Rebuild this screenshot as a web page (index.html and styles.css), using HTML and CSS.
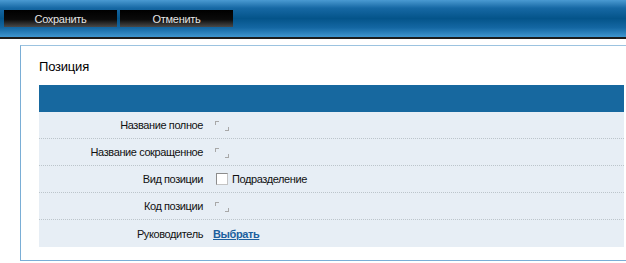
FILE: index.html
```html
<!DOCTYPE html>
<html lang="ru">
<head>
    <meta charset="UTF-8">
    <title>Позиция</title>
    <link rel="stylesheet" href="styles.css">
</head>
<body>
    <div class="toolbar">
        <button class="tool-btn">Сохранить</button>
        <button class="tool-btn">Отменить</button>
    </div>

    <div class="panel">
        <h1 class="panel-title">Позиция</h1>
        <div class="form">
            <div class="form-head"></div>
            <div class="row">
                <div class="label">Название полное</div>
                <div class="value"><span class="field-mark"></span></div>
            </div>
            <div class="row">
                <div class="label">Название сокращенное</div>
                <div class="value"><span class="field-mark"></span></div>
            </div>
            <div class="row">
                <div class="label">Вид позиции</div>
                <div class="value"><span class="check"></span>Подразделение</div>
            </div>
            <div class="row">
                <div class="label">Код позиции</div>
                <div class="value"><span class="field-mark"></span></div>
            </div>
            <div class="row">
                <div class="label">Руководитель</div>
                <div class="value"><a href="#" class="pick">Выбрать</a></div>
            </div>
        </div>
    </div>
</body>
</html>
```

FILE: styles.css
```css
body {
    margin: 0;
    padding: 0;
    font-family: "Liberation Sans", Arial, sans-serif;
    font-size: 11px;
    color: #111;
    background-color: #fff;
    overflow: hidden;
}

.toolbar {
    height: 27px;
    padding: 10px 0 0 4px;
    display: flex;
    gap: 3px;
    align-items: flex-start;
    background: linear-gradient(to bottom, #4a9ad2 0%, #1668a4 22%, #04548a 50%, #1467a3 75%, #3f96d0 100%);
    border-bottom: 2px solid #1d1d1d;
}

.tool-btn {
    width: 113px;
    height: 17px;
    padding: 0;
    border: none;
    background: linear-gradient(to bottom, #000 0%, #0a0a0a 55%, #4a4a4a 100%);
    color: #e4e4e4;
    font-family: "Liberation Sans", Arial, sans-serif;
    font-size: 11px;
    letter-spacing: -0.3px;
    cursor: pointer;
}

.panel {
    margin: 6px 0 0 20px;
    padding: 0 2px 13px 18px;
    border: 1px solid #7aaed6;
    border-right: none;
    border-top-color: #9cc3e0;
}

.panel-title {
    margin: 0;
    height: 39px;
    line-height: 42px;
    font-size: 13px;
    font-weight: normal;
    color: #000;
    letter-spacing: -0.2px;
}

.form {
    background-color: #e7eef5;
    letter-spacing: -0.4px;
}

.form-head {
    height: 27px;
    background-color: #17689f;
}

.row {
    display: flex;
    align-items: center;
    height: 27px;
    border-bottom: 1px dotted #bcc5cb;
    box-sizing: border-box;
}

.row:last-child {
    border-bottom: none;
}

.label {
    width: 164px;
    text-align: right;
    padding-right: 10px;
}

.value {
    display: flex;
    align-items: center;
}

.field-mark {
    position: relative;
    display: inline-block;
    width: 14px;
    height: 10px;
    margin-left: 2px;
    margin-top: 1px;
}

.field-mark::before,
.field-mark::after {
    content: "";
    position: absolute;
    width: 3px;
    height: 3px;
    border: 1px solid #a8a8a8;
}

.field-mark::before {
    top: 0;
    left: 0;
    border-right: none;
    border-bottom: none;
}

.field-mark::after {
    right: 0;
    bottom: 0;
    border-left: none;
    border-top: none;
}

.check {
    display: inline-block;
    width: 10px;
    height: 10px;
    margin: 0 4px 0 3px;
    background-color: #fff;
    border: 1px solid #c4c4c4;
    border-top-color: #8c8c8c;
    border-left-color: #8c8c8c;
}

.pick {
    color: #1c5f9e;
    font-weight: bold;
    text-decoration: underline;
}
```
